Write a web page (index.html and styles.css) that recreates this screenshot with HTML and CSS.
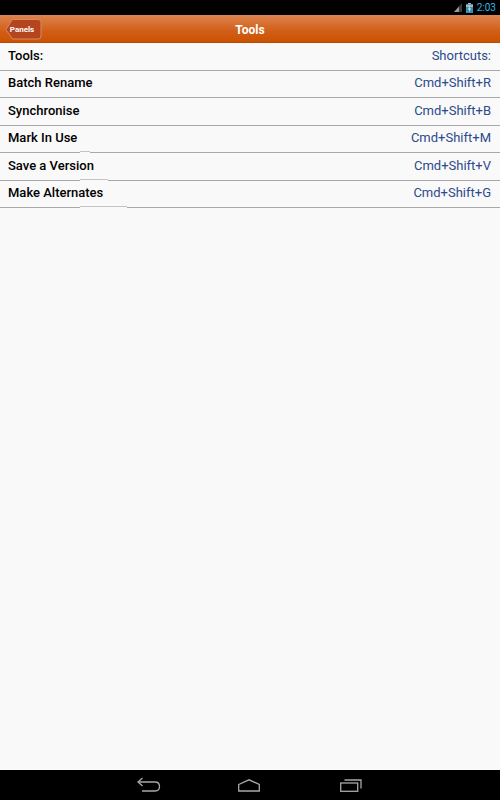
FILE: index.html
```html
<!DOCTYPE html>
<html lang="en">
<head>
<meta charset="utf-8">
<title>Tools</title>
<link rel="stylesheet" href="styles.css">
</head>
<body>
<div class="screen">
  <div class="status">
    <svg class="signal" width="8" height="9" viewBox="0 0 8 9"><path d="M0 9L8 0V9Z" fill="#3a3a3a"/><path d="M0 9L5 3.500V9Z" fill="#9a9a9a"/></svg>
    <svg class="battery" width="7" height="10" viewBox="0 0 7 10"><rect x="2" y="0" width="3" height="1.500" fill="#9fb8c4"/><rect x="0" y="1.500" width="7" height="8.500" fill="#2f8fb5"/><rect x="0" y="1.500" width="7" height="2.500" fill="#a9b6bc"/><path d="M4 2.500L2 6.500H3.500L3 9.500L5 5.500H3.500Z" fill="#e8f4f8"/></svg>
    <span class="clock">2:03</span>
  </div>
  <header class="bar">
    <div class="back">
      <svg class="back-shape" width="37" height="21" viewBox="0 0 37 21"><path d="M7.500.5H33a3 3 0 0 1 3 3V17a3 3 0 0 1-3 3H7.500L.8 10.500Z" fill="#b5451f" stroke="#d98a5e"/></svg>
      <span class="back-label">Panels</span>
    </div>
    <h1 class="title">Tools</h1>
  </header>
  <main class="list">
    <div class="row"><span class="name">Tools:</span><span class="key">Shortcuts:</span></div>
    <div class="row"><span class="name">Batch Rename</span><span class="key">Cmd+Shift+R</span></div>
    <div class="row"><span class="name">Synchronise</span><span class="key">Cmd+Shift+B</span></div>
    <div class="row"><span class="name">Mark In Use</span><span class="key">Cmd+Shift+M</span><i class="glitch g1"></i></div>
    <div class="row"><span class="name">Save a Version</span><span class="key">Cmd+Shift+V</span><i class="glitch g2"></i></div>
    <div class="row"><span class="name">Make Alternates</span><span class="key">Cmd+Shift+G</span><i class="glitch g3"></i></div>
  </main>
  <nav class="nav">
    <svg width="24" height="16" viewBox="0 0 24 16" fill="none" stroke="#a8a8a8" stroke-width="1.300"><path d="M1 5H18C21 5 22.500 7 22.500 9.500S21 14 18 14H5"/><path d="M5.500 1L1 5L5.500 9"/></svg>
    <svg width="22" height="13" viewBox="0 0 22 13" fill="none" stroke="#a8a8a8" stroke-width="1.300"><path d="M.7 5.500L11 .8L21.300 5.500V12H.7Z"/></svg>
    <svg class="recents" width="22" height="13" viewBox="0 0 22 13" fill="none" stroke="#a8a8a8" stroke-width="1.300"><rect x=".7" y="4" width="17" height="8.300"/><path d="M4.500 1H21V9.500"/></svg>
  </nav>
</div>
</body>
</html>
```
FILE: styles.css
```css
* { box-sizing: border-box; }
html, body { margin: 0; padding: 0; }
body { font-family: Roboto, "Liberation Sans", sans-serif; background: #f9f9f9; }
.screen { width: 500px; height: 800px; display: flex; flex-direction: column; overflow: hidden; }
.status { height: 15px; background: #000; display: flex; align-items: center; justify-content: flex-end; padding-right: 4px; }
.signal { margin-right: 4px; }
.battery { margin-right: 4px; }
.clock { color: #33b5e5; font-size: 10px; line-height: 15px; }
.bar { height: 28px; padding-top: 2px; background: linear-gradient(#dd8450, #d15e17 60%, #cc5200); border-bottom: 1px solid #b84a08; display: flex; align-items: center; justify-content: center; position: relative; }
.back { position: absolute; left: 5px; top: 4px; width: 37px; height: 21px; display: flex; align-items: center; justify-content: center; padding-right: 3px; }
.back-shape { position: absolute; left: 0; top: 0; }
.back-label { position: relative; color: #fff; font-size: 8px; font-weight: 700; }
.title { margin: 0; color: #fff; font-size: 12px; font-weight: 700; }
.list { flex: 1; background: #f9f9f9; }
.row { height: 27.500px; border-bottom: 1px solid #a8a8a8; padding: 0 9px 2px 8px; display: flex; align-items: center; justify-content: space-between; position: relative; }
.name { color: #000; font-size: 13px; font-weight: 500; }
.key { color: #2c4a8c; font-size: 13px; }
.glitch { position: absolute; left: 80px; bottom: -1px; height: 2px; background: #f9f9f9; border-top: 1px solid #c4c4c4; }
.g1 { width: 10px; }
.g2 { width: 28px; }
.g3 { width: 47px; }
.nav { height: 30px; background: #000; display: flex; align-items: center; padding-left: 137px; gap: 77px; }
.recents { margin-left: 3px; }
```
